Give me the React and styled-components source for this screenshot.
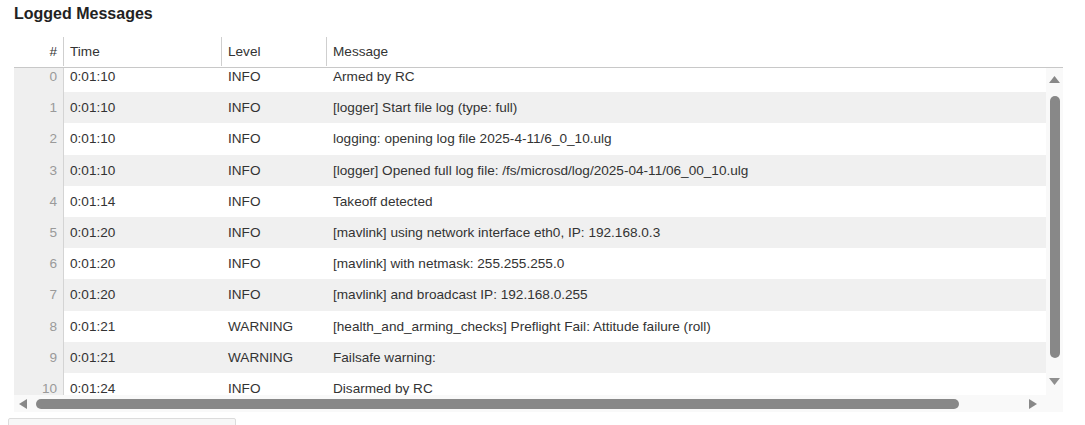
import React from "react";
import styled, { createGlobalStyle } from "styled-components";

const logs = [
  { time: "0:01:10", level: "INFO", msg: "Armed by RC" },
  { time: "0:01:10", level: "INFO", msg: "[logger] Start file log (type: full)" },
  { time: "0:01:10", level: "INFO", msg: "logging: opening log file 2025-4-11/6_0_10.ulg" },
  { time: "0:01:10", level: "INFO", msg: "[logger] Opened full log file: /fs/microsd/log/2025-04-11/06_00_10.ulg" },
  { time: "0:01:14", level: "INFO", msg: "Takeoff detected" },
  { time: "0:01:20", level: "INFO", msg: "[mavlink] using network interface eth0, IP: 192.168.0.3" },
  { time: "0:01:20", level: "INFO", msg: "[mavlink] with netmask: 255.255.255.0" },
  { time: "0:01:20", level: "INFO", msg: "[mavlink] and broadcast IP: 192.168.0.255" },
  { time: "0:01:21", level: "WARNING", msg: "[health_and_arming_checks] Preflight Fail: Attitude failure (roll)" },
  { time: "0:01:21", level: "WARNING", msg: "Failsafe warning:" },
  { time: "0:01:24", level: "INFO", msg: "Disarmed by RC" },
  { time: "0:01:30", level: "INFO", msg: "[logger] closed logfile, bytes written: 1843210" },
];

const GlobalStyle = createGlobalStyle`
  html, body {
    margin: 0;
    padding: 0;
    background: #fff;
  }
  body {
    font-family: "Liberation Sans", Arial, sans-serif;
    color: #333;
  }
`;

const Page = styled.div`
  width: 1085px;
  height: 425px;
  overflow: hidden;
  padding: 4px 8px 0;
  box-sizing: border-box;
`;

const Title = styled.h2`
  margin: 0 0 13px 6px;
  font-size: 16px;
  line-height: 19px;
  font-weight: 700;
  color: #222;
`;

const Table = styled.div`
  margin-left: 6px;
  width: 1049px;
  font-size: 13.6px;
`;

const Cols = `
  display: grid;
  grid-template-columns: 50px 158px 105px 1fr;
`;

const HeaderRow = styled.div`
  ${Cols}
  height: 31px;
  border-bottom: 1px solid #c8c8c8;
`;

const HeadCell = styled.div`
  display: flex;
  align-items: center;
  justify-content: ${(p) => (p.$right ? "flex-end" : "flex-start")};
  padding: 0 6px;
  margin: 1px 0;
  color: #333;
  border-right: ${(p) => (p.$last ? "none" : "1px solid #cfcfcf")};
  white-space: nowrap;
`;

const BodyFrame = styled.div`
  display: grid;
  grid-template-columns: 1fr 17px;
  grid-template-rows: 327px 17px;
  background: #f9f9f9;
`;

const Viewport = styled.div`
  overflow: hidden;
  background: #fff;
`;

const Rows = styled.div`
  width: 1110px;
  margin-top: -7px;
`;

const Row = styled.div`
  ${Cols}
  height: 31.2px;
  background: ${(p) => (p.$odd ? "#f0f0f0" : "#fff")};
`;

const IndexCell = styled.div`
  display: flex;
  align-items: center;
  justify-content: flex-end;
  padding-right: 6px;
  background: #efefef;
  border-right: 1px solid #d4d4d4;
  color: #9a9a9a;
`;

const Cell = styled.div`
  display: flex;
  align-items: center;
  padding-left: 6px;
  white-space: nowrap;
  color: #333;
`;

const VScroll = styled.div`
  display: flex;
  flex-direction: column;
  align-items: center;
  padding-top: 8px;
`;

const HScroll = styled.div`
  display: flex;
  align-items: center;
  padding-left: 5px;
`;

const VThumb = styled.div`
  width: 10px;
  height: 262px;
  border-radius: 5px;
  background: #888;
  margin: 13px 0 20px;
`;

const HThumb = styled.div`
  height: 10px;
  width: 923px;
  border-radius: 5px;
  background: #888;
  margin: 0 70px 0 9px;
`;

const Corner = styled.div`
  background: #f9f9f9;
`;

const FooterButton = styled.div`
  margin-top: 6px;
  width: 226px;
  height: 30px;
  border: 1px solid #dcdcdc;
  background: #f7f7f7;
  border-radius: 2px;
`;

const Arrow = ({ dir }) => {
  const pts = {
    up: "0,7 5.5,0 11,7",
    down: "0,0 11,0 5.5,7",
    left: "8,0 8,10 0,5",
    right: "0,0 0,10 8,5",
  }[dir];
  const vertical = dir === "up" || dir === "down";
  return (
    <svg width={vertical ? 11 : 8} height={vertical ? 7 : 10} viewBox={vertical ? "0 0 11 7" : "0 0 8 10"}>
      <polygon points={pts} fill={dir === "down" ? "#8f8f8f" : "#888"} />
    </svg>
  );
};

export default function App() {
  return (
    <Page>
      <GlobalStyle />
      <Title>Logged Messages</Title>
      <Table>
        <HeaderRow>
          <HeadCell $right>#</HeadCell>
          <HeadCell>Time</HeadCell>
          <HeadCell>Level</HeadCell>
          <HeadCell $last>Message</HeadCell>
        </HeaderRow>
        <BodyFrame>
          <Viewport>
            <Rows>
              {logs.map((l, i) => (
                <Row key={i} $odd={i % 2 === 1}>
                  <IndexCell>{i}</IndexCell>
                  <Cell>{l.time}</Cell>
                  <Cell>{l.level}</Cell>
                  <Cell>{l.msg}</Cell>
                </Row>
              ))}
            </Rows>
          </Viewport>
          <VScroll>
            <Arrow dir="up" />
            <VThumb />
            <Arrow dir="down" />
          </VScroll>
          <HScroll>
            <Arrow dir="left" />
            <HThumb />
            <Arrow dir="right" />
          </HScroll>
          <Corner />
        </BodyFrame>
      </Table>
      <FooterButton />
    </Page>
  );
}
